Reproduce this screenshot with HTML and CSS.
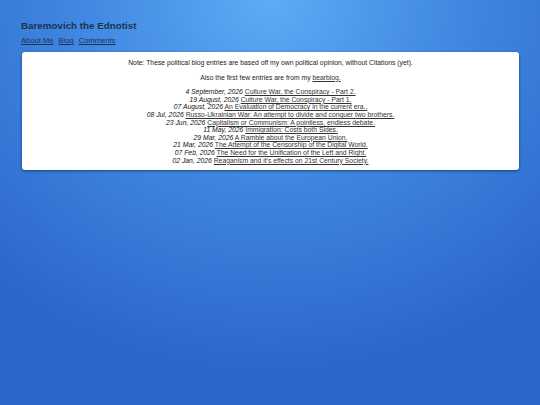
FILE: index.html
```html
<!DOCTYPE html>
<html>
<head>
<meta charset="utf-8">
<link rel="stylesheet" href="styles.css">
</head>
<body>
<header class="site-header">
  <h1 class="site-title">Baremovich the Ednotist</h1>
  <nav class="site-nav">
    <a href="#">About Me</a>
    <a href="#">Blog</a>
    <a href="#">Comments</a>
  </nav>
</header>
<main class="card">
  <p class="note">Note: These political blog entries are based off my own political opinion, without Citations (yet).</p>
  <p class="note">Also the first few entries are from my <a href="#">bearblog.</a></p>
  <ul class="posts">
    <li><i>4 September, 2026</i> <a href="#">Culture War, the Conspiracy - Part 2.</a></li>
    <li><i>19 August, 2026</i> <a href="#">Culture War, the Conspiracy - Part 1.</a></li>
    <li><i>07 August, 2026</i> <a href="#">An Evaluation of Democracy in the current era..</a></li>
    <li><i>08 Jul, 2026</i> <a href="#">Russo-Ukrainian War: An attempt to divide and conquer two brothers.</a></li>
    <li><i>23 Jun, 2026</i> <a href="#">Capitalism or Communism: A pointless, endless debate.</a></li>
    <li><i>11 May, 2026</i> <a href="#">Immigration: Costs both Sides.</a></li>
    <li><i>29 Mar, 2026</i> <a href="#">A Ramble about the European Union.</a></li>
    <li><i>21 Mar, 2026</i> <a href="#">The Attempt of the Censorship of the Digital World.</a></li>
    <li><i>07 Feb, 2026</i> <a href="#">The Need for the Unification of the Left and Right.</a></li>
    <li><i>02 Jan, 2026</i> <a href="#">Reaganism and it's effects on 21st Century Society.</a></li>
  </ul>
</main>
</body>
</html>
```
FILE: styles.css
```css
html {
  min-height: 100%;
  background: radial-gradient(ellipse 75% 90% at 50% 0%, #5eabf6 0%, #4189e2 45%, #2c68cc 100%);
}
body {
  margin: 0;
  padding: 19px 21px;
  font-family: "Liberation Sans", Arial, sans-serif;
  color: #222;
}
.site-title {
  margin: 0;
  font-size: 9.8px;
  font-weight: bold;
  color: #1f3150;
  line-height: 14px;
}
.site-nav {
  margin-top: 3px;
  display: flex;
  gap: 5px;
  font-size: 7.6px;
  line-height: 10px;
}
.site-nav a {
  color: #1f3150;
  text-decoration-thickness: 0.6px;
}
.card {
  margin-top: 6px;
  margin-left: 1px;
  background: #fff;
  border-radius: 3px;
  box-shadow: 0 1px 3px rgba(0, 30, 80, 0.6);
  padding: 7px 10px 6px;
  text-align: center;
  font-size: 6.8px;
  line-height: 7.6px;
}
.note {
  margin: 0 0 7px;
}
.card a {
  color: #333;
  text-decoration-thickness: 0.5px;
  text-underline-offset: 1px;
}
.posts {
  list-style: none;
  margin: 0;
  padding: 0;
}
.posts i {
  color: #111;
}
```
